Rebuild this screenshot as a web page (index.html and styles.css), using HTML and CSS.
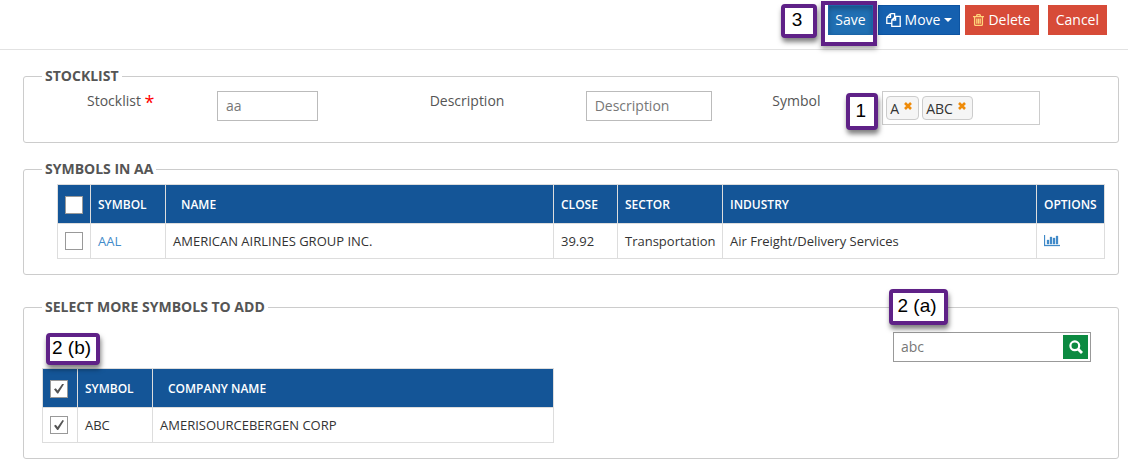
FILE: index.html
```html
<!DOCTYPE html>
<html lang="en">
<head>
<meta charset="utf-8">
<title>Stocklist</title>
<link rel="stylesheet" href="styles.css">
</head>
<body>
<header class="toolbar">
  <div class="anchor">
    <span class="callout callout-save">3</span>
    <button class="btn btn-save" type="submit" form="stocklist-form">Save</button>
    <span class="highlight"></span>
  </div>
  <button class="btn btn-move" type="button">
    <svg class="icon-copy" viewBox="0 0 15 14" aria-hidden="true"><path d="M4.5.7H8.6V5L5.8 7.5M4.5.7.8 4.3V10.3H5.4M4.5.7V4.3H.8M9.6 3.3H14.2V13.3H5.8V7.1ZM9.6 3.3V7.1H5.8" fill="none" stroke="currentColor" stroke-width="1.3"/></svg>
    Move
    <span class="caret"></span>
  </button>
  <button class="btn btn-danger" type="button">
    <svg class="icon-trash" viewBox="0 0 11 12" aria-hidden="true"><path d="M0 2.6H11M3.5 2.3 4.1.7H6.9L7.5 2.3M1.6 2.8V10.4Q1.6 11.4 2.6 11.4H8.4Q9.4 11.4 9.4 10.4V2.8M3.8 4.5V9.7M5.5 4.5V9.7M7.2 4.5V9.7" fill="none" stroke="currentColor" stroke-width="1.3"/></svg>
    Delete
  </button>
  <button class="btn btn-danger btn-cancel" type="button">Cancel</button>
</header>

<main>
<form id="stocklist-form">
  <fieldset class="panel">
    <legend>STOCKLIST</legend>
    <div class="fields">
      <div class="field field-name">
        <label for="name">Stocklist <span class="required">*</span></label>
        <input class="text-input" id="name" type="text" value="aa">
      </div>
      <div class="field field-description">
        <label for="description">Description</label>
        <input class="text-input" id="description" type="text" placeholder="Description">
      </div>
      <div class="field field-symbol">
        <span class="label">Symbol</span>
        <div class="anchor">
          <span class="callout callout-symbol">1</span>
          <div class="tags">
            <span class="tag">A<button class="tag-remove" type="button" aria-label="Remove A"><svg viewBox="0 0 8 8" aria-hidden="true"><path d="M1 1 7 7M7 1 1 7" stroke="currentColor" stroke-width="2.6"/></svg></button></span>
            <span class="tag">ABC<button class="tag-remove" type="button" aria-label="Remove ABC"><svg viewBox="0 0 8 8" aria-hidden="true"><path d="M1 1 7 7M7 1 1 7" stroke="currentColor" stroke-width="2.6"/></svg></button></span>
          </div>
        </div>
      </div>
    </div>
  </fieldset>

  <fieldset class="panel panel-symbols">
    <legend>SYMBOLS IN AA</legend>
    <div class="symbols">
      <table class="grid">
        <colgroup><col class="c-check"><col class="c-symbol"><col class="c-name"><col class="c-close"><col class="c-sector"><col><col class="c-options"></colgroup>
        <thead>
          <tr><th><input type="checkbox" aria-label="Select all symbols"></th><th>SYMBOL</th><th class="wide">NAME</th><th>CLOSE</th><th>SECTOR</th><th>INDUSTRY</th><th>OPTIONS</th></tr>
        </thead>
        <tbody>
          <tr><td><input type="checkbox" aria-label="Select AAL"></td><td><a href="#aal">AAL</a></td><td>AMERICAN AIRLINES GROUP INC.</td><td>39.92</td><td>Transportation</td><td>Air Freight/Delivery Services</td><td><a href="#chart" aria-label="Chart"><svg class="icon-chart" viewBox="0 0 16 12" aria-hidden="true"><path d="M0 0H1V10H16V11H0ZM3 5H5V9H3ZM6 2H8V9H6ZM9 3H11V9H9ZM12 1H14V9H12Z" fill="currentColor" stroke="currentColor" stroke-width=".3"/></svg></a></td></tr>
        </tbody>
      </table>
    </div>
  </fieldset>

  <fieldset class="panel panel-add">
    <legend>SELECT MORE SYMBOLS TO ADD</legend>
    <div class="add">
      <div class="anchor results">
        <span class="callout callout-results">2 (b)</span>
        <table class="grid">
          <colgroup><col class="c-check-add"><col class="c-symbol"><col></colgroup>
          <thead>
            <tr><th><input type="checkbox" aria-label="Select all results" checked></th><th>SYMBOL</th><th class="wide">COMPANY NAME</th></tr>
          </thead>
          <tbody>
            <tr><td><input type="checkbox" aria-label="Select ABC" checked></td><td>ABC</td><td>AMERISOURCEBERGEN CORP</td></tr>
          </tbody>
        </table>
      </div>
      <div class="anchor">
        <span class="callout callout-search">2 (a)</span>
        <div class="search">
          <input type="text" value="abc" aria-label="Search symbols">
          <button type="button" aria-label="Search"><svg viewBox="0 0 14 14" aria-hidden="true"><circle cx="5.8" cy="5.8" r="4.4" fill="none" stroke="currentColor" stroke-width="2.2"/><path d="M9 9 13 13" stroke="currentColor" stroke-width="2.8"/></svg></button>
        </div>
      </div>
    </div>
  </fieldset>
</form>
</main>
</body>
</html>
```
FILE: styles.css
```css
* { box-sizing: border-box; }

body {
  margin: 0;
  background: #fff;
  color: #555;
  font: 14px/20px "Open Sans", "Noto Sans", sans-serif;
}

button, input { font: inherit; }
button { cursor: pointer; }
svg { display: block; }
a { color: #428bca; text-decoration: none; }

.anchor { position: relative; }

/* Toolbar */
.toolbar {
  display: flex;
  justify-content: flex-end;
  gap: 5px;
  padding: 5px 21px 14px;
  border-bottom: 1px solid #e2e2e2;
}

.btn {
  display: flex;
  align-items: center;
  gap: 4px;
  height: 30px;
  padding: 0 7px;
  border: 1px solid #d74b38;
  color: #fff;
}

.btn-save { padding: 0 6px; background: #206fb3; border-color: #1a65a8; box-shadow: inset 0 3px 5px rgba(0, 0, 0, .25); }
.btn-move { background: #1560af; border-color: #0d54a2; }
.btn-danger { background: #d74b38; }
.btn-cancel { margin-left: 4px; }

.icon-copy { width: 15px; height: 14px; }
.icon-trash { width: 11px; height: 12px; color: #ffd479; }

.caret {
  border: 4px solid transparent;
  border-top-color: #fff;
  border-bottom: 0;
}

/* Step callouts */
.callout {
  position: absolute;
  z-index: 1;
  display: grid;
  place-items: center;
  padding: 0 3px 2px 0;
  border: 4px solid #5f2187;
  border-radius: 4px;
  background: #fff;
  box-shadow: 1px 4px 5px rgba(0, 0, 0, .5);
  color: #000;
  font: 19px/22px "Liberation Sans", Arial, sans-serif;
  white-space: nowrap;
}

.callout-save { right: 56px; top: -1px; width: 36px; height: 34px; }
.callout-symbol { left: -36px; top: 2px; width: 32px; height: 37px; }
.callout-results { left: 4px; top: -35px; width: 54px; height: 32px; }
.callout-search { left: -4px; top: -43px; width: 59px; height: 36px; }

.highlight {
  position: absolute;
  inset: -4px -4px -11px -7px;
  border: 4px solid #5f2187;
  box-shadow: 0 3px 5px rgba(0, 0, 0, .35);
  pointer-events: none;
}

/* Panels */
main { padding: 0 9px 12px 23px; }

.panel {
  min-width: 0;
  margin: 16px 0 0;
  padding: 0;
  border: 1px solid #ccc;
  border-radius: 3px;
}

.panel-add { margin-top: 22px; }

legend {
  margin-left: 18px;
  padding: 0 3px;
  font-weight: 700;
}

/* Form fields */
.fields {
  display: grid;
  grid-template-columns: repeat(3, 1fr);
  padding: 5px 3px 17px 63px;
}

.field { display: grid; align-items: start; }
.field-name { grid-template-columns: 130px 101px; }
.field-description { grid-template-columns: 156px 126px; }
.field-symbol { grid-template-columns: 110px 158px; }

.required { color: #f00; font-size: 18px; line-height: 16px; vertical-align: -3px; }

.text-input {
  width: 100%;
  height: 30px;
  padding: 0 8px 2px;
  border: 1px solid #bbb;
  background: #fff;
  color: #777;
}

.text-input::placeholder { color: #777; opacity: 1; }

.tags {
  display: flex;
  gap: 3px;
  padding: 4px 3px;
  border: 1px solid #ccc;
}

.tag {
  display: flex;
  gap: 5px;
  height: 24px;
  padding: 2px 6px 0 3px;
  border: 1px solid #ccc;
  border-radius: 4px;
  background: #f5f5f5;
  color: #333;
}

.tag-remove {
  width: 8px;
  height: 8px;
  margin-top: 3px;
  padding: 0;
  border: 0;
  background: none;
  color: #ef8b09;
}

/* Tables */
.grid {
  width: 100%;
  border-collapse: collapse;
  table-layout: fixed;
  color: #333;
  font-size: 13px;
}

.grid th, .grid td {
  padding: 0 7px;
  border: 1px solid #ddd;
  text-align: left;
  white-space: nowrap;
}

.grid th {
  height: 39px;
  padding-top: 1px;
  background: #145597;
  color: #fff;
  font-size: 12px;
  font-weight: 600;
}

.grid th.wide { padding-left: 15px; }
.grid td { height: 35px; }

.c-check { width: 33px; }
.c-check-add { width: 35px; }
.c-symbol { width: 75px; }
.c-name { width: 388px; }
.c-close { width: 64px; }
.c-sector { width: 105px; }
.c-options { width: 68px; }

.grid input {
  display: grid;
  place-items: center;
  width: 18px;
  height: 18px;
  margin: 0;
  appearance: none;
  border: 1px solid #999;
  background: #fff;
}

.grid input:checked::before {
  content: "";
  width: 10px;
  height: 10px;
  background: #555;
  clip-path: polygon(0 58%, 18% 48%, 36% 70%, 85% 0, 100% 8%, 42% 100%, 32% 100%);
}

.icon-chart { width: 16px; height: 12px; }

.symbols { padding: 5px 13px 15px 33px; }

/* Symbol search */
.add {
  display: grid;
  grid-template-columns: 512px 198px;
  justify-content: space-between;
  padding: 15px 27px 15px 18px;
}

.results { margin-top: 36px; }

.search {
  display: flex;
  align-items: center;
  height: 30px;
  padding: 2px;
  border: 1px solid #999;
}

.search input {
  flex: 1;
  min-width: 0;
  padding: 0 5px;
  border: 0;
  background: none;
  color: #777;
  outline: 0;
}

.search button {
  display: grid;
  place-items: center;
  width: 25px;
  height: 24px;
  padding: 0;
  border: 0;
  background: #0c8a41;
  color: #fff;
}

.search svg { width: 14px; height: 14px; }
```
